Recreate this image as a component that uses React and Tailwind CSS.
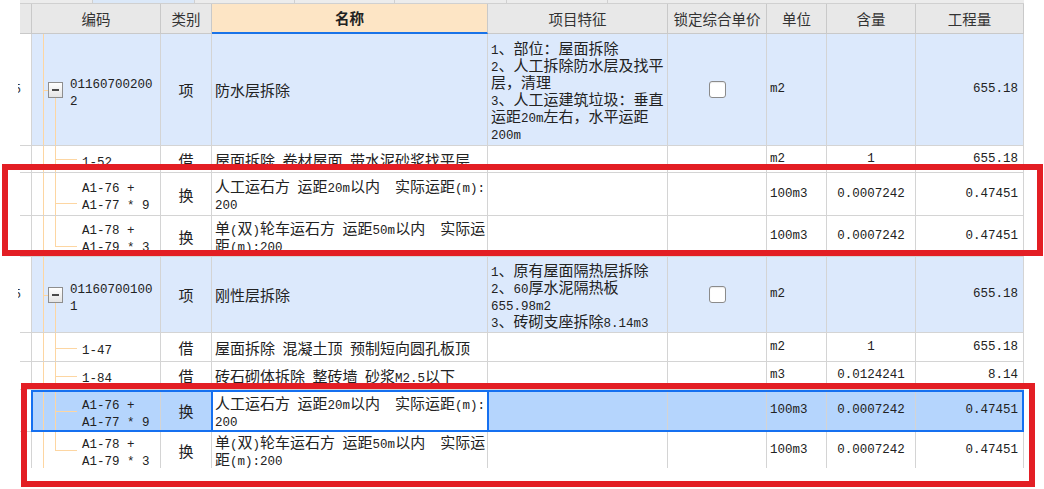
import React from "react";

const LINE = "bg-[#fdd6a2]";

const rows = [
  {
    id: "r1",
    h: "h-[112px]",
    parent: true,
    code: ["01160700200", "2"],
    type: "项",
    name: ["防水层拆除"],
    feature: [
      "1、部位：屋面拆除",
      "2、人工拆除防水层及找平",
      "层，清理",
      "3、人工运建筑垃圾：垂直",
      "运距20m左右，水平运距",
      "200m",
    ],
    unit: "m2",
    qty: "",
    total: "655.18",
  },
  {
    id: "r2",
    h: "h-[27px]",
    lineY: 13,
    code: ["1-52"],
    type: "借",
    name: ["屋面拆除 卷材屋面 带水泥砂浆找平层"],
    unit: "m2",
    qty: "1",
    total: "655.18",
  },
  {
    id: "r3",
    h: "h-[43px]",
    lineY: 30,
    code: ["A1-76 +", "A1-77 * 9"],
    type: "换",
    name: ["人工运石方 运距20m以内  实际运距(m):", "200"],
    unit: "100m3",
    qty: "0.0007242",
    total: "0.47451",
  },
  {
    id: "r4",
    h: "h-[41px]",
    lineY: 30,
    last: true,
    code: ["A1-78 +", "A1-79 * 3"],
    type: "换",
    name: ["单(双)轮车运石方 运距50m以内  实际运", "距(m):200"],
    unit: "100m3",
    qty: "0.0007242",
    total: "0.47451",
  },
  {
    id: "r5",
    h: "h-[76px]",
    parent: true,
    code: ["01160700100", "1"],
    type: "项",
    name: ["刚性层拆除"],
    feature: [
      "1、原有屋面隔热层拆除",
      "2、60厚水泥隔热板",
      "655.98m2",
      "3、砖砌支座拆除8.14m3",
    ],
    unit: "m2",
    qty: "",
    total: "655.18",
  },
  {
    id: "r6",
    h: "h-[29px]",
    lineY: 15,
    code: ["1-47"],
    type: "借",
    name: ["屋面拆除 混凝土顶 预制短向圆孔板顶"],
    unit: "m2",
    qty: "1",
    total: "655.18",
  },
  {
    id: "r7",
    h: "h-[28px]",
    lineY: 14,
    code: ["1-84"],
    type: "借",
    name: ["砖石砌体拆除 整砖墙 砂浆M2.5以下"],
    unit: "m3",
    qty: "0.0124241",
    total: "8.14",
  },
  {
    id: "r8",
    h: "h-[42px]",
    lineY: 21,
    selected: true,
    code: ["A1-76 +", "A1-77 * 9"],
    type: "换",
    name: ["人工运石方 运距20m以内  实际运距(m):", "200"],
    unit: "100m3",
    qty: "0.0007242",
    total: "0.47451",
  },
  {
    id: "r9",
    h: "h-[36px]",
    lineY: 18,
    last: true,
    open: true,
    code: ["A1-78 +", "A1-79 * 3"],
    type: "换",
    name: ["单(双)轮车运石方 运距50m以内  实际运", "距(m):200"],
    unit: "100m3",
    qty: "0.0007242",
    total: "0.47451",
  },
];

// ASCII runs are set in a narrow mono face, like the half-width glyphs of SimSun
function Txt({ s }) {
  const parts = s.split(/([\x20-\x7e]+)/).filter(Boolean);
  return parts.map((p, i) =>
    /^[\x20-\x7e]+$/.test(p) ? (
      <span
        key={i}
        className="[font-family:'Liberation_Mono',monospace] text-[12.5px] whitespace-pre"
      >
        {p}
      </span>
    ) : (
      <span key={i}>{p}</span>
    )
  );
}

function Lines({ items }) {
  return (
    <div>
      {items.map((s, i) => (
        <div key={i} className="h-[17px] leading-[17px] whitespace-nowrap">
          <Txt s={s} />
        </div>
      ))}
    </div>
  );
}

function Tree({ row }) {
  return (
    <>
      <span className={`absolute left-[11px] top-0 -bottom-px w-px ${LINE}`} />
      {row.parent ? (
        <>
          <span className={`absolute left-[11px] top-1/2 w-[5px] h-px ${LINE}`} />
          <span
            className={`absolute left-[23px] top-[calc(50%+8px)] -bottom-px w-px ${LINE}`}
          />
          <span className="absolute left-[16px] top-1/2 -translate-y-1/2 w-[15px] h-[16px] border border-[#8e8e8e] bg-linear-to-b from-white to-[#e4e4e4] flex items-center justify-center">
            <span className="w-[7px] h-[2px] bg-[#4a4a4a]" />
          </span>
        </>
      ) : (
        <>
          <span
            className={`absolute left-[23px] top-0 w-px ${LINE} ${
              row.last ? "" : "-bottom-px"
            }`}
            style={row.last ? { height: row.lineY } : undefined}
          />
          <span
            className={`absolute left-[23px] w-[22px] h-px ${LINE}`}
            style={{ top: row.lineY }}
          />
        </>
      )}
    </>
  );
}

function Row({ row }) {
  const bg = row.selected
    ? "bg-[#b5d5fd]"
    : row.parent
    ? "bg-[#dce9fc]"
    : "bg-white";
  const bb = row.open ? "" : "border-b";
  const cell = `h-full shrink-0 overflow-hidden border-r ${bb} border-[#d4d4d4] flex items-center leading-[17px] text-[15px] text-[#222]`;

  return (
    <div className={`relative flex shrink-0 ${row.h}`}>
      <div className="w-[20px] h-full flex items-center justify-end">
        {row.parent && (
          <span className="w-[3px] -mr-[1px] overflow-hidden flex justify-end">
            <span className="[font-family:'Liberation_Mono',monospace] text-[12.5px] text-[#333]">
              5
            </span>
          </span>
        )}
      </div>
      <div className={`w-[12px] h-full border-r ${bb} border-[#d4d4d4]`} />

      <div className={`${cell} ${bg} relative w-[129px]`}>
        <Tree row={row} />
        <div className={row.parent ? "pl-[38px]" : "pl-[50px]"}>
          <Lines items={row.code} />
        </div>
      </div>

      <div className={`${cell} ${bg} w-[51px] justify-center`}>{row.type}</div>

      <div
        className={`${cell} ${row.selected ? "bg-white" : bg} w-[276px] pl-[3px]`}
      >
        <Lines items={row.name} />
      </div>

      <div className={`${cell} ${bg} w-[180px] pl-[3px]`}>
        {row.feature && <Lines items={row.feature} />}
      </div>

      <div className={`${cell} ${bg} w-[99px] justify-center`}>
        {row.parent && (
          <span className="w-[17px] h-[17px] rounded-[3px] border border-[#8b8b8b] bg-white shadow-[inset_0_1px_1px_rgba(0,0,0,0.08)]" />
        )}
      </div>

      <div className={`${cell} ${bg} w-[60px] pl-[3px]`}>
        <Txt s={row.unit} />
      </div>

      <div className={`${cell} ${bg} w-[89px] justify-center`}>
        <Txt s={row.qty} />
      </div>

      <div className={`${cell} ${bg} w-[108px] justify-end pr-[5px]`}>
        <Txt s={row.total} />
      </div>

      {row.selected && (
        <>
          <div className="absolute left-[31px] right-0 top-0 bottom-0 border-2 border-[#1570f0] pointer-events-none" />
          <div className="absolute left-[211px] w-[278px] top-0 bottom-0 border-2 border-[#1570f0] pointer-events-none" />
        </>
      )}
    </div>
  );
}

function HeaderCell({ w, children, active }) {
  return (
    <div
      className={`${w} h-full shrink-0 flex items-center justify-center border-r border-[#c9c9c9] text-[14.5px] ${
        active
          ? "bg-[#fde5c5] font-bold text-[#222] border-b-2 border-b-[#1a73e8]"
          : "bg-[#e8e8e8] text-[#333] border-b"
      }`}
    >
      {children}
    </div>
  );
}

export default function App() {
  return (
    <div className="relative w-[1044px] h-[489px] overflow-hidden bg-white [font-family:'Noto_Sans_CJK_SC',sans-serif]">
      <div className="w-[1024px] flex flex-col">
        <div className="flex h-[4px] shrink-0">
          <div className="w-[20px]" />
          <div className="w-[73px] bg-[#ececec] border-r border-b border-[#d0d0d0]" />
          <div className="w-[102px] bg-[#dbe8f8] border-r border-b border-[#d0d0d0]" />
          <div className="w-[100px] bg-[#ececec] border-r border-b border-[#d0d0d0]" />
          <div className="w-[100px] bg-[#ececec] border-r border-b border-[#d0d0d0]" />
          <div className="w-[112px] bg-[#ececec] border-r border-b border-[#d0d0d0]" />
          <div className="w-[101px] bg-[#ececec] border-r border-b border-[#d0d0d0]" />
          <div className="flex-1 bg-[#ececec] border-b border-[#d0d0d0]" />
        </div>

        <div className="flex h-[30px] shrink-0">
          <div className="w-[20px]" />
          <div className="w-[12px] h-full bg-[#e8e8e8] border-r border-b border-[#c9c9c9]" />
          <HeaderCell w="w-[129px]">编码</HeaderCell>
          <HeaderCell w="w-[51px]">类别</HeaderCell>
          <HeaderCell w="w-[276px]" active>
            名称
          </HeaderCell>
          <HeaderCell w="w-[180px]">项目特征</HeaderCell>
          <HeaderCell w="w-[99px]">锁定综合单价</HeaderCell>
          <HeaderCell w="w-[60px]">单位</HeaderCell>
          <HeaderCell w="w-[89px]">含量</HeaderCell>
          <HeaderCell w="w-[108px]">工程量</HeaderCell>
        </div>

        {rows.map((row) => (
          <Row key={row.id} row={row} />
        ))}
      </div>

      {/* annotation frames */}
      <div className="absolute left-[2px] top-[164px] w-[1041px] h-[92px] border-[6px] border-[#e31e24] pointer-events-none" />
      <div className="absolute left-[21px] top-[383px] w-[1014px] h-[104px] border-[6px] border-[#e31e24] pointer-events-none" />
    </div>
  );
}
